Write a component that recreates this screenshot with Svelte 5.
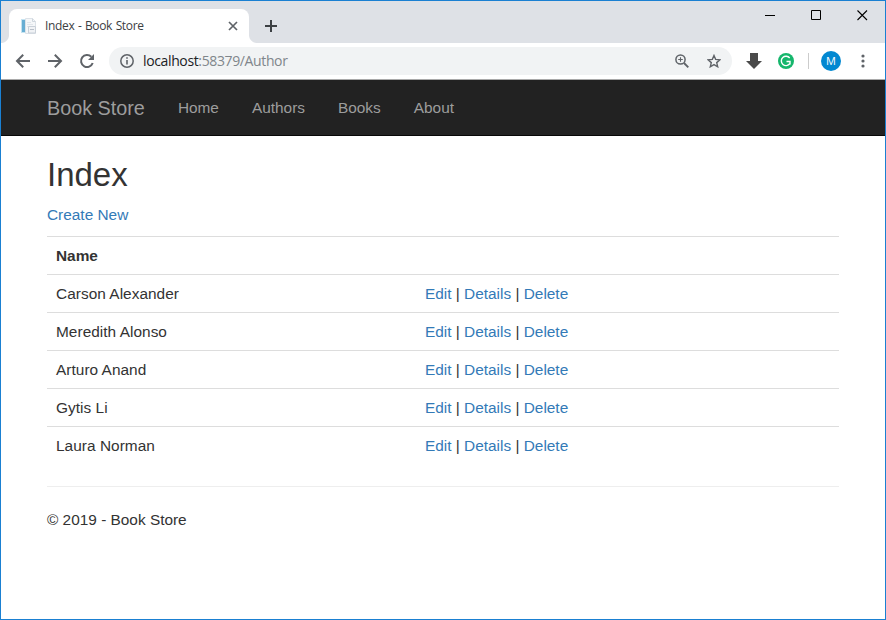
<script>
  const nav = ['Home', 'Authors', 'Books', 'About'];
  const authors = ['Carson Alexander', 'Meredith Alonso', 'Arturo Anand', 'Gytis Li', 'Laura Norman'];
</script>

<div class="window">
  <div class="strip">
    <div class="tab">
      <svg class="favicon" width="16" height="17" viewBox="0 0 16 17">
        <path d="M4.5.5h7l3 3v12h-10z" fill="#f5f7f9" stroke="#dce2e8" />
        <path d="M11.5.5v3h3" fill="none" stroke="#cfd6dd" />
        <path d="M6 4.5h4M6 6.5h6M6 8.5h2" stroke="#e1e5ea" />
        <rect x="0" y="1" width="4" height="14" fill="#c5e3f1" />
        <rect x="1" y="2" width="3" height="12" fill="#68aed3" />
        <path d="M7.500 8.500h7v6.500h-7z" fill="#f0f2f5" stroke="#c9d0d8" />
        <path d="M9 11.500h4" stroke="#b9c0c9" />
      </svg>
      <span class="title">Index - Book Store</span>
      <svg class="close" width="10" height="10" viewBox="0 0 10 10"><path d="M1 1l8 8M9 1l-8 8" stroke="#5f6368" stroke-width="1.7" /></svg>
    </div>
    <svg class="plus" width="12" height="12" viewBox="0 0 12 12"><path d="M6 0v12M0 6h12" stroke="#3c4043" stroke-width="2" /></svg>
    <div class="controls">
      <svg width="11" height="11" viewBox="0 0 11 11"><path d="M0 5.500h10" stroke="#000" /></svg>
      <svg width="11" height="11" viewBox="0 0 11 11"><path d="M.5.5h9v9h-9z" fill="none" stroke="#000" /></svg>
      <svg width="11" height="11" viewBox="0 0 11 11"><path d="M.5.5l9.500 9.500M10 .5l-9.500 9.500" stroke="#000" stroke-width="1.100" /></svg>
    </div>
  </div>

  <div class="toolbar">
    <svg class="arrow" width="16" height="16" viewBox="0 0 16 16"><path d="M15 8H2.500M8.200 1.800L2 8L8.200 14.200" fill="none" stroke="#5f6368" stroke-width="2" /></svg>
    <svg class="arrow" width="16" height="16" viewBox="0 0 16 16"><path d="M1 8h12.500M7.800 1.800L14 8L7.800 14.200" fill="none" stroke="#5f6368" stroke-width="2" /></svg>
    <svg class="arrow" width="16" height="16" viewBox="0 0 16 16"><path d="M13.700 10A6 6 0 1 1 12.300 3.800" fill="none" stroke="#5f6368" stroke-width="2" /><path d="M15 1v6H9z" fill="#5f6368" /></svg>
    <div class="omnibox">
      <svg width="14" height="14" viewBox="0 0 14 14"><circle cx="7" cy="7" r="6.200" fill="none" stroke="#5f6368" stroke-width="1.500" /><path d="M7 6v4.500M7 3.300v1.500" stroke="#5f6368" stroke-width="1.600" /></svg>
      <span class="url"><b>localhost</b>:58379/Author</span>
      <svg class="zoom" width="14" height="14" viewBox="0 0 14 14"><circle cx="5.500" cy="5.500" r="4.600" fill="none" stroke="#5f6368" stroke-width="1.500" /><path d="M9 9l4.300 4.300" stroke="#5f6368" stroke-width="1.900" /><path d="M5.500 3.200v4.600M3.200 5.500h4.600" stroke="#5f6368" stroke-width="1.100" /></svg>
      <svg width="14" height="14" viewBox="0 0 14 14"><path d="M7 1.500l1.650 3.850 4.300.4-3.250 2.850 1 4.150L7 10.550l-3.700 2.200 1-4.150-3.250-2.850 4.300-.4z" fill="none" stroke="#5f6368" stroke-width="1.400" /></svg>
    </div>
    <svg class="down" width="16" height="16" viewBox="0 0 16 16"><path d="M4 0h8v8h4l-8 8-8-8h4z" fill="#4a4a4a" /></svg>
    <svg class="grammar" width="16" height="16" viewBox="0 0 16 16"><circle cx="8" cy="8" r="8" fill="#15b66c" /><path d="M11.700 5A4.700 4.700 0 1 0 11.800 10.700" fill="none" stroke="#fff" stroke-width="1.400" /><path d="M8.500 8.500H12V11.500" fill="none" stroke="#fff" stroke-width="1.400" /></svg>
    <i class="divider"></i>
    <span class="avatar">M</span>
    <svg class="menu" width="4" height="14" viewBox="0 0 4 14"><g fill="#5f6368"><circle cx="2" cy="2" r="1.600" /><circle cx="2" cy="7" r="1.600" /><circle cx="2" cy="12" r="1.600" /></g></svg>
  </div>

  <nav>
    <span class="brand">Book Store</span>
    {#each nav as item}<span class="link">{item}</span>{/each}
  </nav>

  <main>
    <h2>Index</h2>
    <p class="create"><span class="action">Create New</span></p>
    <div class="table">
      <div class="row head"><span>Name</span></div>
      {#each authors as author}
        <div class="row">
          <span class="name">{author}</span>
          <span><span class="action">Edit</span> | <span class="action">Details</span> | <span class="action">Delete</span></span>
        </div>
      {/each}
    </div>
    <hr />
    <footer>© 2019 - Book Store</footer>
  </main>
</div>

<style>
  .window {
    box-sizing: border-box;
    width: 886px;
    height: 620px;
    border: 1px solid #1a80d2;
    background: #fff;
    overflow: hidden;
    color: #333;
    font: 15.4px/22px "Liberation Sans", Arial, sans-serif;
  }
  svg { display: block; flex: none; }
  .strip {
    display: flex;
    height: 42px;
    background: #dee1e6;
  }
  .tab {
    display: flex;
    align-items: center;
    box-sizing: border-box;
    position: relative;
    width: 240px;
    height: 34px;
    margin: 8px 0 0 8px;
    padding: 0 11px 0 12px;
    background: #fff;
    border-radius: 8px 8px 0 0;
  }
  .tab::before, .tab::after {
    content: "";
    position: absolute;
    bottom: 0;
    width: 8px;
    height: 8px;
  }
  .tab::before { left: -8px; background: radial-gradient(circle at 0 0, transparent 7.5px, #fff 8.5px); }
  .tab::after { right: -8px; background: radial-gradient(circle at 100% 0, transparent 7.5px, #fff 8.5px); }
  .title {
    flex: 1;
    margin-left: 8px;
    color: #3c4043;
    font: 12px/16px "Open Sans", "Noto Sans", sans-serif;
    letter-spacing: -0.35px;
    word-spacing: 0.8px;
    white-space: nowrap;
  }
  .plus { margin: 19px 0 0 16px; }
  .controls {
    display: flex;
    gap: 35px;
    margin: 9px 17px 0 auto;
  }
  .toolbar {
    display: flex;
    align-items: center;
    box-sizing: border-box;
    height: 37px;
    padding-left: 14px;
    border-bottom: 1px solid #a9a9a9;
  }
  .arrow { margin-right: 16px; }
  .omnibox {
    display: flex;
    align-items: center;
    box-sizing: border-box;
    width: 623px;
    height: 28px;
    margin-left: -2px;
    margin-right: 14px;
    padding: 0 11px;
    border-radius: 14px;
    background: #f1f3f4;
  }
  .url {
    flex: 1;
    margin-left: 9px;
    color: #80868b;
    font: 14px/20px "Open Sans", "Noto Sans", sans-serif;
    letter-spacing: -0.37px;
  }
  .url b { color: #202124; font-weight: 400; }
  .zoom { margin-right: 18px; }
  .grammar { margin-left: 16px; }
  .divider {
    width: 1px;
    height: 16px;
    margin: 0 12px 0 14px;
    background: #ccc;
  }
  .avatar {
    width: 20px;
    height: 20px;
    border-radius: 50%;
    background: #0288d1;
    color: #fff;
    font: 400 11px/20px "Open Sans", sans-serif;
    text-align: center;
  }
  .menu { margin-left: 20px; }
  nav {
    display: flex;
    box-sizing: border-box;
    height: 56px;
    padding-left: 46px;
    border-bottom: 1px solid #080808;
    background: #222;
    color: #9d9d9d;
    line-height: 56px;
  }
  .brand { margin-right: 33px; font-size: 19.8px; }
  .link { margin-right: 33px; }
  main { padding: 0 46px; }
  h2 {
    margin: 21px 0 0;
    font-size: 33px;
    line-height: 36px;
    font-weight: 500;
  }
  .create { margin: 11px 0 10px; }
  .action { color: #337ab7; }
  .row {
    display: grid;
    grid-template-columns: 369px 1fr;
    box-sizing: border-box;
    height: 38px;
    padding: 8px 9px;
    border-top: 1px solid #ddd;
  }
  .head { font-weight: 700; }
  .name { letter-spacing: 0.04px; }
  hr {
    margin: 22px 0;
    border: 0;
    border-top: 1px solid #eee;
  }
</style>
